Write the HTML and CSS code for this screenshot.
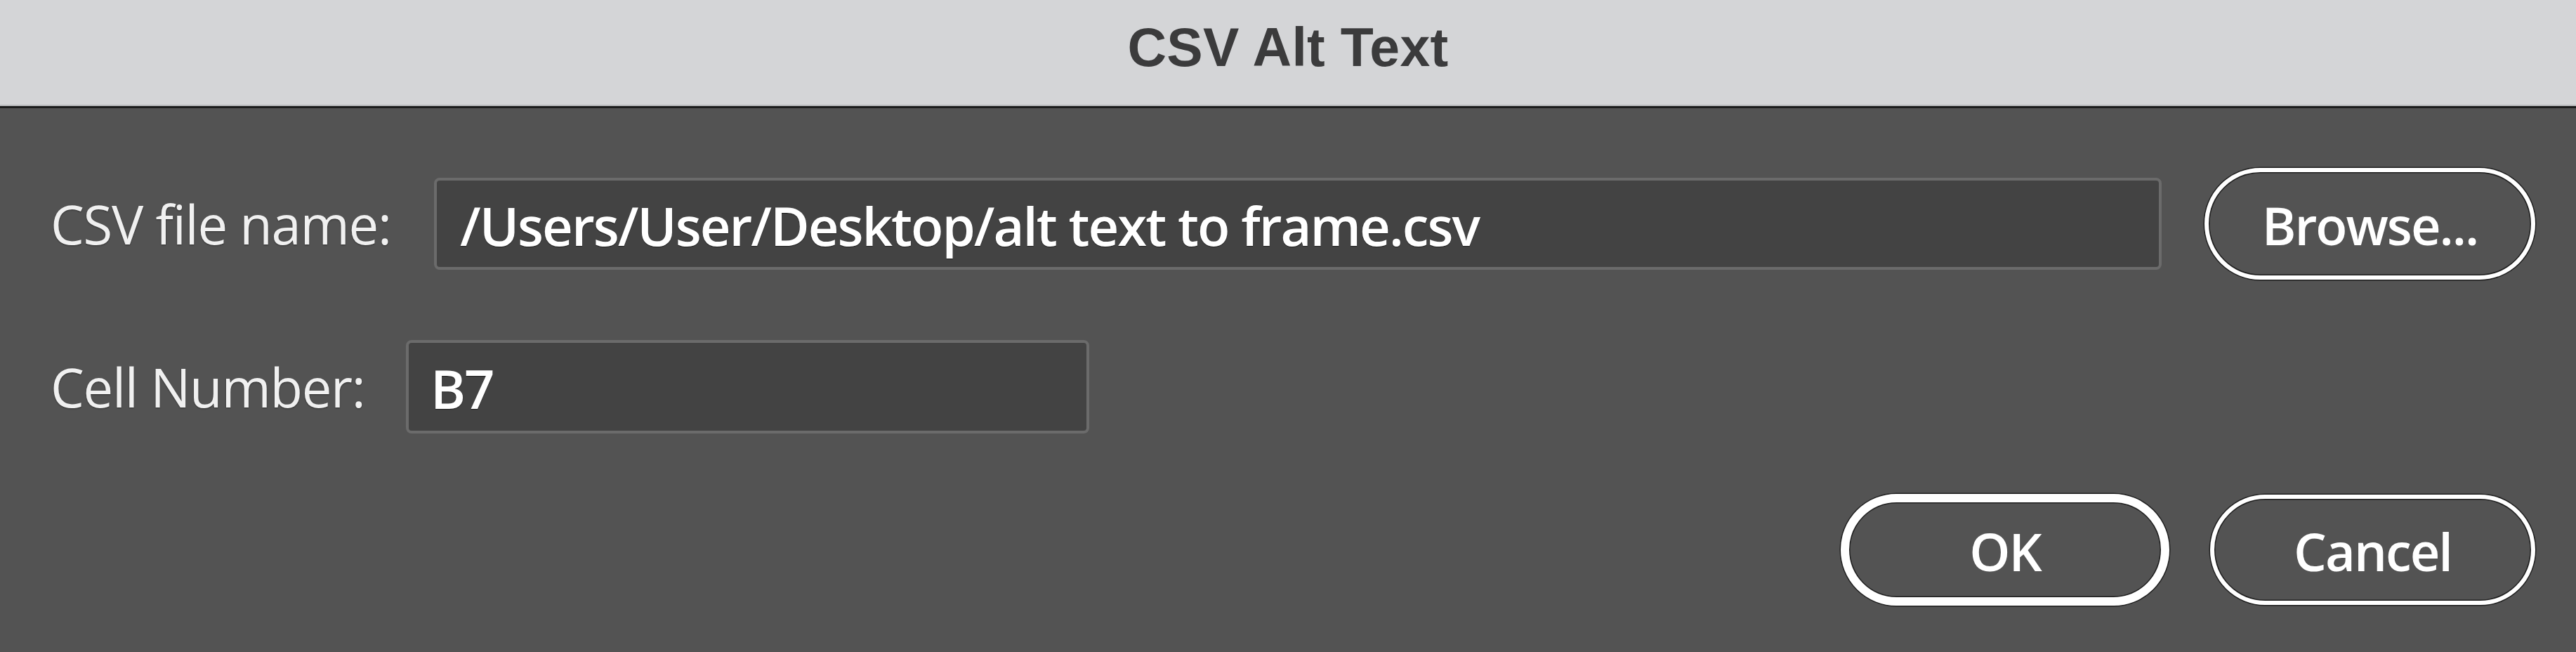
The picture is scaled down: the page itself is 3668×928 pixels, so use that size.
FILE: index.html
```html
<!DOCTYPE html>
<html lang="en">
<head>
<meta charset="utf-8">
<title>CSV Alt Text</title>
<link rel="stylesheet" href="styles.css">
</head>
<body>
<div class="dialog">
  <div class="titlebar"><span class="title">CSV Alt Text</span></div>
  <div class="content">
    <div class="row row-file">
      <label class="label label-file">CSV file name:</label>
      <div class="field field-file">/Users/User/Desktop/alt text to frame.csv</div>
      <button class="btn btn-browse">Browse...</button>
    </div>
    <div class="row row-cell">
      <label class="label label-cell">Cell Number:</label>
      <div class="field field-cell">B7</div>
    </div>
    <div class="row row-actions">
      <button class="btn btn-ok">OK</button>
      <button class="btn btn-cancel">Cancel</button>
    </div>
  </div>
</div>
</body>
</html>
```
FILE: styles.css
```css
html, body {
  margin: 0;
  padding: 0;
}
body {
  width: 3668px;
  height: 928px;
  overflow: hidden;
  background: #535353;
  font-family: "Open Sans", "Noto Sans", "Liberation Sans", sans-serif;
}
.dialog {
  display: flex;
  flex-direction: column;
  height: 928px;
}
.titlebar {
  height: 135px;
  padding-bottom: 16px;
  background: #d4d5d7;
  border-bottom: 3px solid #1c1c1c;
  box-shadow: inset 0 -2px 0 #b9babc;
  display: flex;
  align-items: center;
  justify-content: center;
}
.title {
  font-family: "Liberation Sans", Arial, sans-serif;
  font-weight: bold;
  font-size: 77px;
  color: #3b3b3c;
  letter-spacing: 0.3px;
}
.content {
  display: flex;
  flex-direction: column;
  gap: 86px;
  padding: 85px 58px 0 72px;
}
.row {
  display: flex;
  align-items: center;
}
.label {
  font-size: 76px;
  letter-spacing: -1.3px;
  color: #f0f0f0;
  text-shadow: 0 1px 2px rgba(0, 0, 0, 0.45);
  white-space: nowrap;
}
.label-file {
  width: 546px;
  flex: none;
}
.label-cell {
  width: 506px;
  flex: none;
}
.field {
  box-sizing: border-box;
  background: #434343;
  border: 4px solid #6b6b6b;
  border-radius: 8px;
  color: #ffffff;
  font-size: 76px;
  font-weight: 600;
  letter-spacing: -2px;
  display: flex;
  align-items: center;
  padding-left: 33px;
  padding-top: 4px;
  white-space: nowrap;
  text-shadow: 0 1px 1px rgba(0, 0, 0, 0.6);
}
.field-file {
  flex: 1;
  height: 131px;
  margin-right: 61px;
}
.field-cell {
  width: 973px;
  height: 133px;
  padding-left: 31px;
}
.btn {
  box-sizing: border-box;
  height: 159px;
  background: transparent;
  border: 6px solid #ffffff;
  border-radius: 80px;
  box-shadow: 0 0 0 1.5px #1e1e1e, inset 0 0 0 1.5px #1e1e1e;
  color: #ffffff;
  font-family: "Open Sans", "Noto Sans", "Liberation Sans", sans-serif;
  font-size: 74px;
  font-weight: 600;
  letter-spacing: -2px;
  padding: 4px 0 0 0;
  flex: none;
}
.btn-browse {
  width: 471px;
}
.row-actions {
  justify-content: flex-end;
  gap: 58px;
}
.btn-ok {
  width: 468px;
  border-width: 12px;
}
.btn-cancel {
  width: 463px;
  height: 157px;
}
```
